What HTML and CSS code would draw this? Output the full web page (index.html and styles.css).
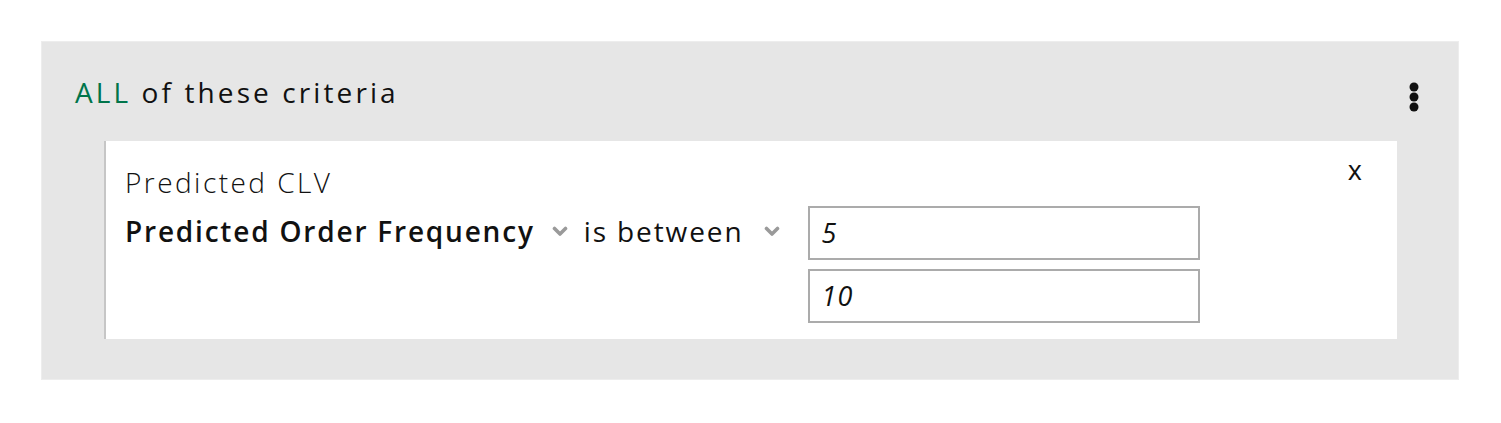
FILE: index.html
```html
<!DOCTYPE html>
<html lang="en">
<head>
<meta charset="utf-8">
<title>Criteria</title>
<link rel="stylesheet" href="styles.css">
</head>
<body>
<section class="group">
  <header class="group-head">
    <h2 class="group-title"><span class="match">ALL</span> of these criteria</h2>
    <button class="kebab" aria-label="More options">
      <svg width="10" height="30" viewBox="0 0 10 30"><circle cx="5" cy="5" r="4.5"/><circle cx="5" cy="15" r="4.5"/><circle cx="5" cy="25" r="4.5"/></svg>
    </button>
  </header>
  <div class="card">
    <div class="card-top">
      <div class="category">Predicted CLV</div>
      <button class="close" aria-label="Remove">x</button>
    </div>
    <div class="rule">
      <div class="select field">Predicted Order Frequency
        <svg class="chev" width="16" height="11" viewBox="0 0 16 11"><polyline points="2.5,2.5 8,8 13.5,2.5"/></svg>
      </div>
      <div class="select op">is between
        <svg class="chev" width="16" height="11" viewBox="0 0 16 11"><polyline points="2.5,2.5 8,8 13.5,2.5"/></svg>
      </div>
      <div class="values">
        <div class="value">5</div>
        <div class="value">10</div>
      </div>
    </div>
  </div>
</section>
</body>
</html>
```

FILE: styles.css
```css
* { box-sizing: border-box; }
body {
  margin: 0;
  background: #fff;
  font-family: "Open Sans", "Liberation Sans", sans-serif;
  color: #111;
}
.group {
  margin: 41px 0 0 41px;
  width: 1418px;
  background: #e6e6e6;
  border: 1px solid #ededed;
  padding: 0 39px 40px 33px;
}
.group-head {
  height: 99px;
  padding-top: 33px;
  display: flex;
  justify-content: space-between;
  align-items: flex-start;
}
.group-title {
  margin: 0;
  font-size: 28px;
  line-height: 34px;
  font-weight: 400;
  letter-spacing: 3.1px;
}
.match { color: #00744a; }
.kebab {
  border: 0;
  background: none;
  padding: 0;
  margin-top: 7px;
  display: block;
  fill: #111;
}
.kebab svg { display: block; }
.card {
  margin: 0 22px 0 29px;
  background: #fff;
  border-left: 2px solid #c6c6c6;
  padding: 24px 19px 16px 19px;
}
.card-top {
  display: flex;
  justify-content: space-between;
  align-items: flex-start;
}
.category {
  font-size: 28px;
  line-height: 34px;
  font-weight: 300;
  letter-spacing: 2.45px;
}
.close {
  border: 0;
  background: none;
  padding: 0;
  margin: -12px 16px 0 0;
  font-family: inherit;
  font-size: 27px;
  line-height: 34px;
  color: #111;
}
.rule {
  display: flex;
  align-items: flex-start;
  margin-top: 7px;
}
.select {
  display: flex;
  align-items: center;
  padding-top: 8px;
  font-size: 28px;
  line-height: 34px;
}
.field { font-weight: 600; letter-spacing: 1.8px; }
.op { margin-left: 16px; font-weight: 400; letter-spacing: 1.9px; }
.chev {
  display: block;
  margin-left: 17px;
  fill: none;
  stroke: #9a9a9a;
  stroke-width: 3.6;
  stroke-linecap: round;
  stroke-linejoin: round;
}
.op .chev { margin-left: 20px; }
.values {
  margin-left: 28px;
  display: flex;
  flex-direction: column;
  gap: 9px;
}
.value {
  width: 392px;
  height: 54px;
  border: 2px solid #ababab;
  padding-left: 12px;
  font-size: 27px;
  line-height: 50px;
  font-style: italic;
  letter-spacing: 1px;
  color: #111;
}
```
